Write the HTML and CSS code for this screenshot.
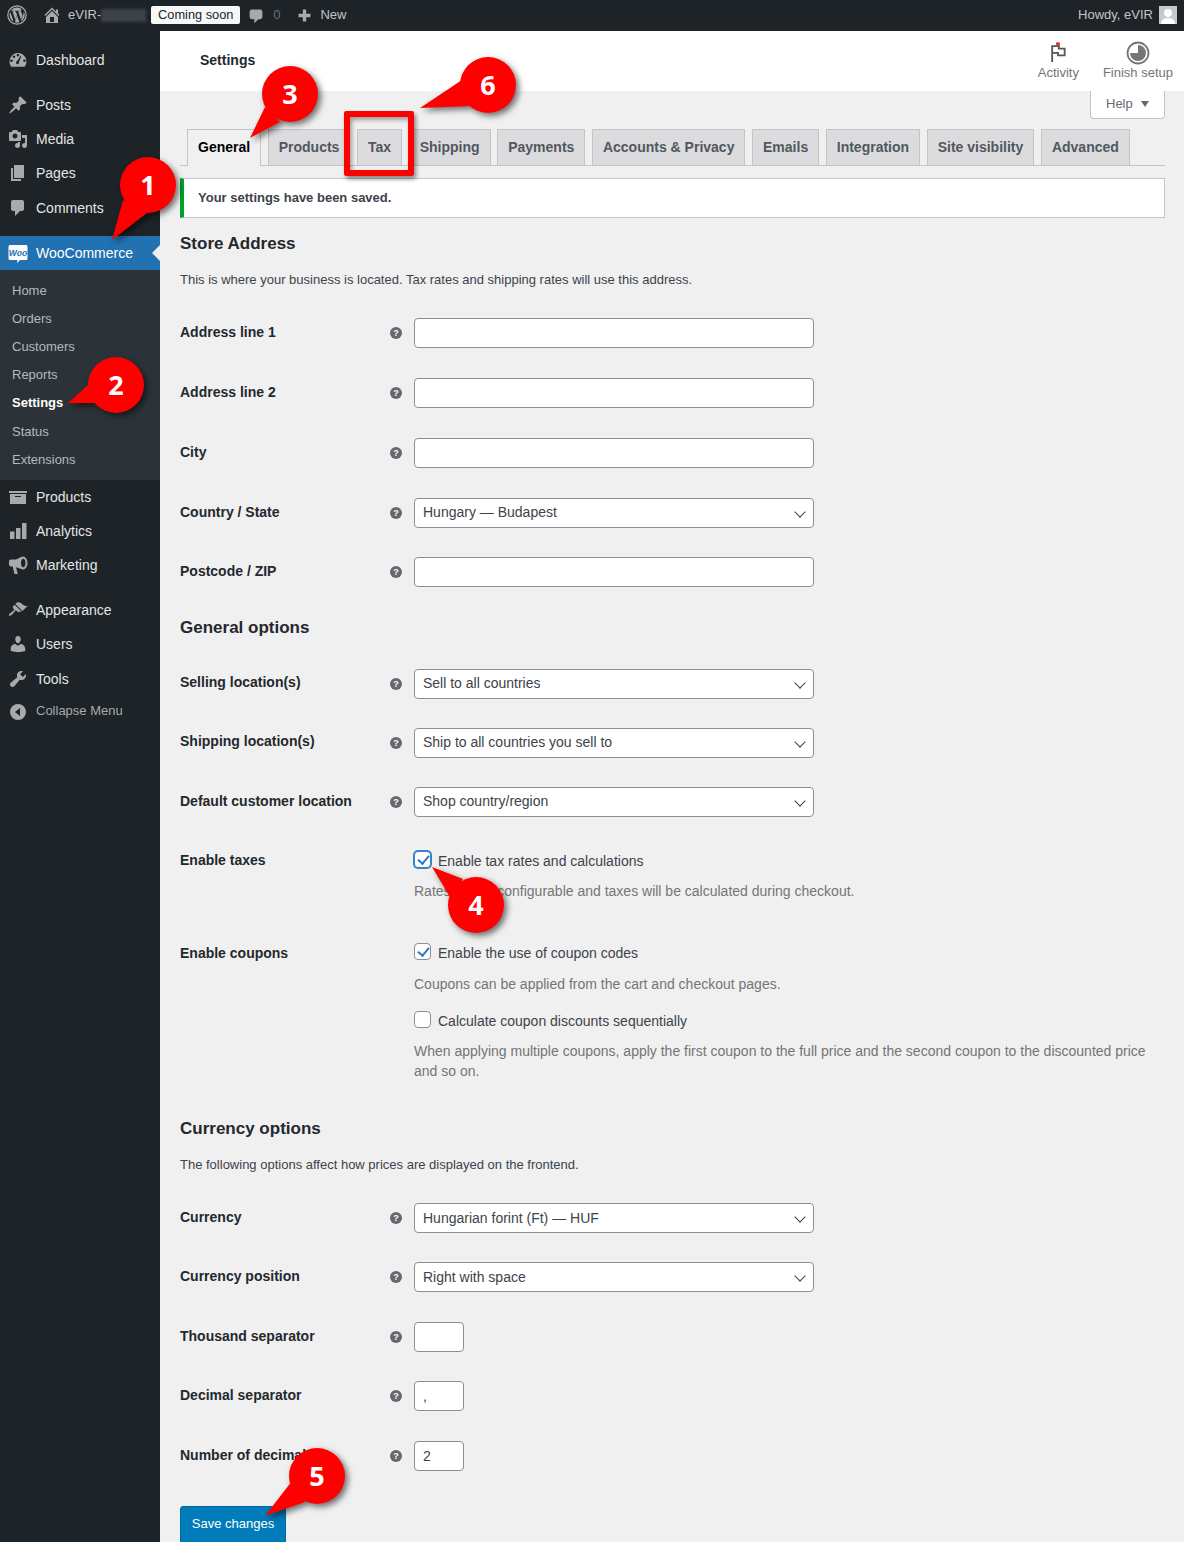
FILE: index.html
```html
<!DOCTYPE html>
<html lang="en">
<head>
<meta charset="utf-8">
<title>Settings</title>
<link rel="stylesheet" href="styles.css">
</head>
<body>
<header class="adminbar">
  <div class="bar-left">
    <svg class="bar-wp" viewBox="0 0 20 20"><circle cx="10" cy="10" r="9.2" fill="none" stroke="currentColor" stroke-width="1.2"/><path fill="currentColor" d="M2.6 10c0 2.9 1.7 5.5 4.2 6.7L3.2 7A7.4 7.4 0 0 0 2.6 10zm12.4-.4c0-.9-.3-1.600-.6-2.100-.4-.6-.7-1.100-.7-1.700 0-.7.5-1.300 1.200-1.300h.1A7.400 7.400 0 0 0 3.800 5.900h.5c.8 0 2-.1 2-.1.400 0 .5.600.1.600 0 0-.4.100-.9.100l2.800 8.400 1.700-5.100-1.200-3.300c-.4 0-.8-.1-.8-.1-.4 0-.4-.6 0-.6 0 0 1.300.1 2 .1.800 0 2-.1 2-.1.400 0 .5.600.1.600 0 0-.4.100-.9.100l2.800 8.300.8-2.600c.3-1.100.6-1.900.6-2.600zm-4.900 1-2.300 6.700a7.400 7.400 0 0 0 4.600-.1l-.1-.1zm6.600-4.300.1.800c0 .8-.1 1.600-.6 2.700l-2.300 6.600a7.400 7.400 0 0 0 2.800-10.100z"/></svg>
    <svg class="bar-home" viewBox="0 0 20 20"><path fill="currentColor" d="M16 8.500l1.530 1.530-1.060 1.060L10 4.620l-6.470 6.470-1.060-1.060L10 2.500l4 4v-2h2v4zm-6-2.460l6 5.990V18H4v-5.970zM12 17v-5H8v5h4z" fill-rule="evenodd"/></svg>
    <span class="bar-site">eVIR-</span><span class="bar-blur"></span>
    <span class="bar-badge">Coming soon</span>
    <svg class="bar-comment" viewBox="0 0 20 20"><path fill="currentColor" d="M5 2h10a3 3 0 0 1 3 3v6a3 3 0 0 1-3 3h-2l-5 5v-5H5a3 3 0 0 1-3-3V5a3 3 0 0 1 3-3z"/></svg>
    <span class="bar-count">0</span>
    <svg class="bar-plus" viewBox="0 0 20 20"><path fill="currentColor" d="M8 3h4v5h5v4h-5v5H8v-5H3V8h5z"/></svg>
    <span class="bar-new">New</span>
  </div>
  <div class="bar-right">
    <span class="bar-howdy">Howdy, eVIR</span>
    <svg class="bar-avatar" viewBox="0 0 18 18"><rect width="18" height="18" fill="#c8c8c8"/><circle cx="9" cy="7" r="4" fill="#fff"/><path fill="#fff" d="M2 18c0-4 3-6 7-6s7 2 7 6z"/></svg>
  </div>
</header>

<div class="shell">
  <nav class="sidebar">
    <ul class="menu menu-first">
      <li class="item"><svg class="ico" viewBox="0 0 20 20"><path d="M10 3a8.500 8.500 0 0 0-8.500 8.500c0 2 .7 3.800 1.800 5.200h13.400a8.400 8.400 0 0 0 1.800-5.200A8.500 8.500 0 0 0 10 3zM6 5.500a1.300 1.300 0 1 1 0 2.600 1.300 1.300 0 0 1 0-2.600zm-2.500 4a1.300 1.300 0 1 1 0 2.600 1.300 1.300 0 0 1 0-2.600zM9 14.200a1.800 1.800 0 0 1 .200-3.300l3.300-4.900.8.400-2.300 5.400A1.800 1.800 0 0 1 9 14.200zM10 4a1.300 1.300 0 1 1 0 2.600A1.300 1.300 0 0 1 10 4zm6.500 5.500a1.300 1.300 0 1 1 0 2.600 1.300 1.300 0 0 1 0-2.600z" fill-rule="evenodd"/></svg>Dashboard</li>
    </ul>
    <ul class="menu">
      <li class="item"><svg class="ico" viewBox="0 0 20 20"><path d="M10.440 3.020l1.820-1.820 6.360 6.350-1.830 1.820c-1.050-.68-2.480-.57-3.410.36l-.75.75c-.92.93-1.040 2.350-.35 3.410l-1.830 1.820-2.410-2.410-2.800 2.790c-.42.42-3.380 2.710-3.800 2.290s1.860-3.390 2.280-3.810l2.790-2.790L4.100 9.360l1.830-1.820c1.050.69 2.480.57 3.400-.36l.75-.75c.93-.92 1.050-2.350.36-3.410z"/></svg>Posts</li>
      <li class="item"><svg class="ico" viewBox="0 0 20 20"><path fill-rule="evenodd" d="M13 11V4c0-.55-.45-1-1-1h-1.670L9 1H5L3.670 3H2c-.55 0-1 .45-1 1v7c0 .55.45 1 1 1h10c.55 0 1-.45 1-1zM7 4.500c1.380 0 2.500 1.120 2.500 2.500S8.380 9.500 7 9.500 4.500 8.380 4.500 7 5.620 4.500 7 4.500zM14 6h5v10.500c0 1.380-1.120 2.500-2.500 2.500S14 17.880 14 16.500s1.120-2.500 2.500-2.500c.17 0 .34.020.5.050V9h-3V6zm-4 8.050V13h2v3.500c0 1.380-1.120 2.500-2.500 2.500S7 17.880 7 16.500 8.120 14 9.500 14c.17 0 .34.020.5.050z"/></svg>Media</li>
      <li class="item"><svg class="ico" viewBox="0 0 20 20"><path d="M6 15V2h10v13H6zm-1 1h8v2H3V5h2v11z"/></svg>Pages</li>
      <li class="item"><svg class="ico" viewBox="0 0 20 20"><path d="M5 2h9c1.100 0 2 .9 2 2v7c0 1.100-.9 2-2 2h-2l-5 5v-5H5c-1.100 0-2-.9-2-2V4c0-1.100.9-2 2-2z"/></svg>Comments</li>
    </ul>
    <div class="woo">
      <div class="item item-current"><svg class="ico-woo" viewBox="0 0 20 20"><path fill="#fff" d="M2 1h16a1.500 1.500 0 0 1 1.500 1.500v12A1.500 1.500 0 0 1 18 16h-6l-3 3 .5-3H2a1.500 1.500 0 0 1-1.500-1.500v-12A1.500 1.500 0 0 1 2 1z"/><text class="woo-text" x="10" y="11.500">Woo</text></svg>WooCommerce</div>
      <ul class="submenu">
        <li>Home</li>
        <li>Orders</li>
        <li>Customers</li>
        <li>Reports</li>
        <li class="sub-current">Settings</li>
        <li>Status</li>
        <li>Extensions</li>
      </ul>
    </div>
    <ul class="menu menu-after-woo">
      <li class="item"><svg class="ico" viewBox="0 0 20 20"><path d="M19 4v2H1V4h18zM2 7h16v10H2V7zm11 3V9H7v1h6z" fill-rule="evenodd"/></svg>Products</li>
      <li class="item"><svg class="ico" viewBox="0 0 20 20"><path d="M2 10.500h4.500V18H2zM8 7h4.500v11H8zM14 2h4.500v16H14z"/></svg>Analytics</li>
      <li class="item"><svg class="ico" viewBox="0 0 20 20"><path fill-rule="evenodd" d="M15 1.500c2.500 0 4.500 3 4.500 6.500s-2 6.500-4.500 6.500c-.6 0-1.200-.2-1.700-.5L8 12.300l1.800 6.700H6.500L4.700 11.500H3A2 2 0 0 1 1 9.500v-3a2 2 0 0 1 2-2h5l5.300-2.500c.5-.3 1.100-.5 1.700-.5zm.2 2.200c-1.300 0-2.200 1.900-2.200 4.300s.9 4.300 2.200 4.300 2.300-1.900 2.300-4.300-1-4.300-2.300-4.300z"/></svg>Marketing</li>
    </ul>
    <ul class="menu">
      <li class="item"><svg class="ico" viewBox="0 0 20 20"><path d="M14.480 11.060L7.410 3.990l1.500-1.500c.5-.56 2.300-.47 3.510.32 1.210.8 1.430 1.280 2.910 2.100 1.180.64 2.450 1.260 4.450.85zm-.71.71L6.700 4.700 4.930 6.470c-.39.39-.39 1.020 0 1.410l1.060 1.060c.39.39.39 1.030 0 1.420-.6.6-1.430 1.110-2.210 1.690-.35.26-.7.53-1.010.84C1.430 13.230.4 14.980 1 15.700c.6.6 2.370-.43 3.710-1.770.31-.31.58-.66.84-1.010.58-.78 1.090-1.610 1.690-2.210.39-.39 1.030-.39 1.420 0l1.060 1.060c.39.39 1.020.39 1.410 0z"/></svg>Appearance</li>
      <li class="item"><svg class="ico" viewBox="0 0 20 20"><path d="M10 9.250c-2.270 0-2.730-3.440-2.730-3.440C7 4.020 7.820 2 9.970 2c2.160 0 2.980 2.020 2.710 3.810 0 0-.41 3.440-2.680 3.440zm0 2.570L12.720 10c2.390 0 4.520 2.330 4.520 4.530v2.490s-3.650 1.130-7.240 1.130c-3.650 0-7.240-1.130-7.240-1.130v-2.490c0-2.250 1.940-4.480 4.470-4.480z"/></svg>Users</li>
      <li class="item"><svg class="ico" viewBox="0 0 20 20"><path d="M16.680 9.770c-1.340 1.340-3.300 1.670-4.950.99l-5.410 6.520c-.99.99-2.590.99-3.580 0s-.99-2.590 0-3.570l6.520-5.420c-.68-1.650-.35-3.610.99-4.950 1.280-1.280 3.120-1.620 4.720-1.060l-2.890 2.890 2.820 2.820 2.860-2.870c.53 1.580.18 3.390-1.080 4.650z"/></svg>Tools</li>
      <li class="item item-collapse"><svg class="ico" viewBox="0 0 20 20"><path fill-rule="evenodd" d="M10 2a8 8 0 1 1 0 16 8 8 0 0 1 0-16zm2 4L7 10l5 4z"/></svg>Collapse Menu</li>
    </ul>
  </nav>

  <div class="main">
    <div class="topbar">
      <h1 class="page-title">Settings</h1>
      <div class="activity">
        <div class="act-item">
          <svg class="act-flag" viewBox="0 0 24 24"><path fill="none" stroke="#50575e" stroke-width="2.200" d="M5 24V5h8v3h7v8h-8v-3H5"/><circle cx="12" cy="2.500" r="2.500" fill="#d63638"/></svg>
          <span>Activity</span>
        </div>
        <div class="act-item">
          <svg class="act-ring" viewBox="0 0 24 24"><circle cx="12" cy="12" r="10.500" fill="none" stroke="#757575" stroke-width="1.800"/><path fill="#757575" d="M12 4a8 8 0 1 1-8 8h8z"/></svg>
          <span>Finish setup</span>
        </div>
      </div>
    </div>

    <div class="content">
      <div class="help-row"><div class="help-tab">Help<span class="help-caret"></span></div></div>

      <div class="tabs">
        <span class="tab tab-active">General</span>
        <span class="tab">Products</span>
        <span class="tab">Tax</span>
        <span class="tab">Shipping</span>
        <span class="tab">Payments</span>
        <span class="tab">Accounts &amp; Privacy</span>
        <span class="tab">Emails</span>
        <span class="tab">Integration</span>
        <span class="tab">Site visibility</span>
        <span class="tab">Advanced</span>
      </div>

      <div class="notice">Your settings have been saved.</div>

      <h2 class="heading heading-store">Store Address</h2>
      <p class="lead">This is where your business is located. Tax rates and shipping rates will use this address.</p>
      <div class="rows rows-store">
        <div class="row"><label class="lbl">Address line 1</label><span class="tip">?</span><input class="field" type="text"></div>
        <div class="row"><label class="lbl">Address line 2</label><span class="tip">?</span><input class="field" type="text"></div>
        <div class="row"><label class="lbl">City</label><span class="tip">?</span><input class="field" type="text"></div>
        <div class="row"><label class="lbl">Country / State</label><span class="tip">?</span><div class="pick">Hungary — Budapest</div></div>
        <div class="row"><label class="lbl">Postcode / ZIP</label><span class="tip">?</span><input class="field" type="text"></div>
      </div>

      <h2 class="heading heading-general">General options</h2>
      <div class="rows rows-general">
        <div class="row"><label class="lbl">Selling location(s)</label><span class="tip">?</span><div class="pick">Sell to all countries</div></div>
        <div class="row"><label class="lbl">Shipping location(s)</label><span class="tip">?</span><div class="pick">Ship to all countries you sell to</div></div>
        <div class="row"><label class="lbl">Default customer location</label><span class="tip">?</span><div class="pick">Shop country/region</div></div>
      </div>

      <div class="checks checks-tax">
        <div class="lbl">Enable taxes</div>
        <div class="check-col">
          <div class="check"><span class="box box-on box-focus"></span>Enable tax rates and calculations</div>
          <p class="hint hint-close">Rates will be configurable and taxes will be calculated during checkout.</p>
        </div>
      </div>

      <div class="checks checks-coupon">
        <div class="lbl">Enable coupons</div>
        <div class="check-col">
          <div class="check"><span class="box box-on"></span>Enable the use of coupon codes</div>
          <p class="hint hint-wide">Coupons can be applied from the cart and checkout pages.</p>
          <div class="check check-second"><span class="box"></span>Calculate coupon discounts sequentially</div>
          <p class="hint hint-close">When applying multiple coupons, apply the first coupon to the full price and the second coupon to the discounted price and so on.</p>
        </div>
      </div>

      <h2 class="heading heading-currency">Currency options</h2>
      <p class="lead">The following options affect how prices are displayed on the frontend.</p>
      <div class="rows rows-currency">
        <div class="row"><label class="lbl">Currency</label><span class="tip">?</span><div class="pick">Hungarian forint (Ft) — HUF</div></div>
        <div class="row"><label class="lbl">Currency position</label><span class="tip">?</span><div class="pick">Right with space</div></div>
        <div class="row"><label class="lbl">Thousand separator</label><span class="tip">?</span><input class="field field-small" type="text"></div>
        <div class="row"><label class="lbl">Decimal separator</label><span class="tip">?</span><input class="field field-small" type="text" value=","></div>
        <div class="row"><label class="lbl">Number of decimals</label><span class="tip">?</span><input class="field field-small" type="text" value="2"></div>
      </div>

      <button class="save" type="button">Save changes</button>
    </div>
  </div>
</div>

<div class="redbox"></div>
<svg class="callouts" viewBox="0 0 1184 1542">
  <g class="bubble">
    <path d="M112 240L123 200L147 213z"/><circle cx="148" cy="185" r="28"/>
  </g>
  <text class="num" x="148" y="195">1</text>
  <g class="bubble">
    <path d="M68 403L88 385L95 403z"/><circle cx="116" cy="385" r="28"/>
  </g>
  <text class="num" x="116" y="395">2</text>
  <g class="bubble">
    <path d="M250 138L265 107L280 122z"/><circle cx="290" cy="94" r="28"/>
  </g>
  <text class="num" x="290" y="104">3</text>
  <g class="bubble">
    <path d="M432 867L463 879L450 897z"/><circle cx="476" cy="905" r="28"/>
  </g>
  <text class="num" x="476" y="915">4</text>
  <g class="bubble">
    <path d="M265 1516L292 1481L305 1502z"/><circle cx="317" cy="1476" r="28"/>
  </g>
  <text class="num" x="317" y="1486">5</text>
  <g class="bubble">
    <path d="M420 108L462 80L470 106z"/><circle cx="488" cy="85" r="28"/>
  </g>
  <text class="num" x="488" y="95">6</text>
</svg>
</body>
</html>
```

FILE: styles.css
```css
* { box-sizing: border-box; }
html, body { margin: 0; padding: 0; height: 1542px; overflow: hidden; }
body {
  position: relative;
  background: #f0f0f1;
  color: #3c434a;
  font-family: "Liberation Sans", Arial, sans-serif;
  font-size: 13px;
  line-height: 20px;
}
ul { list-style: none; margin: 0; padding: 0; }
h1, h2, p { margin: 0; }

/* admin bar */
.adminbar {
  height: 31px;
  background: #1d2327;
  color: #c3c4c7;
  display: flex;
  justify-content: space-between;
  align-items: center;
  padding: 0 7px 1px;
}
.bar-left, .bar-right { display: flex; align-items: center; }
.bar-wp { width: 20px; height: 20px; color: #a7aaad; }
.bar-home { width: 20px; height: 20px; margin-left: 15px; color: #a7aaad; }
.bar-site { margin-left: 6px; }
.bar-blur { width: 45px; height: 13px; background: #3d4347; filter: blur(1.500px); }
.bar-badge {
  margin-left: 5px;
  width: 89px;
  height: 18px;
  font-size: 12.800px;
  line-height: 17px;
  text-align: center;
  background: #f6f7f7;
  color: #1d2327;
  border-radius: 2px;
}
.bar-comment { width: 16px; height: 16px; margin-left: 8px; margin-top: 2px; color: #a7aaad; }
.bar-count { margin-left: 9px; color: #6b7075; }
.bar-plus { width: 17px; height: 17px; margin-left: 16px; margin-top: 1px; color: #a7aaad; }
.bar-new { margin-left: 7px; }
.bar-avatar { width: 18px; height: 18px; margin-left: 6px; }

/* sidebar */
.shell { display: flex; height: 1511px; }
.sidebar { width: 160px; flex: none; background: #1d2327; color: #f0f0f1; font-size: 14px; padding-top: 12px; }
.menu + .menu { margin-top: 10.700px; }
.menu + .woo { margin-top: 11.200px; }
.woo + .menu { margin-top: 0; }
.item {
  height: 34.200px;
  display: flex;
  align-items: center;
  color: #e4e5e6;
}
.ico { width: 20px; height: 20px; margin: 0 8px; fill: #a7aaad; flex: none; }
.ico-woo { width: 20px; height: 20px; margin: 3px 8px 0; flex: none; }
.woo-text { font-size: 8.500px; font-weight: 700; font-style: italic; fill: #2271b1; text-anchor: middle; }
.item-current { position: relative; background: #2271b1; color: #fff; height: 34px; }
.item-current::after {
  content: "";
  position: absolute;
  right: 0;
  top: 9px;
  border: 8px solid transparent;
  border-right-color: #f0f0f1;
  border-left-width: 0;
}
.submenu { background: #2c3338; padding: 6.800px 0 7px; height: 210px; font-size: 13px; color: #b4b9be; }
.submenu li { height: 28.200px; line-height: 28px; padding-left: 12px; }
.sub-current { color: #fff; font-weight: 700; }
.item-collapse { color: #a7aaad; font-size: 13px; height: 30px; }
.item-collapse .ico { margin-top: 2px; }

/* main */
.main { flex: 1; min-width: 0; }
.topbar {
  height: 60px;
  background: #fff;
  display: flex;
  justify-content: space-between;
  padding: 10px 11px 0 40px;
}
.page-title { font-size: 14px; font-weight: 700; color: #23282d; line-height: 20px; margin-top: 9px; }
.activity { display: flex; gap: 24px; }
.act-item { display: flex; flex-direction: column; align-items: center; color: #757575; line-height: 16px; }
.act-flag { width: 20px; height: 22px; }
.act-ring { width: 24px; height: 24px; }
.activity .act-item:first-child span { margin-top: 2px; }

.content { padding: 0 19px 0 20px; }
.help-row { display: flex; justify-content: flex-end; }
.help-tab {
  width: 75px;
  height: 28px;
  background: #fff;
  border: 1px solid #c3c4c7;
  border-top: 0;
  border-radius: 0 0 4px 4px;
  color: #646970;
  padding: 0 0 2px 15px;
  display: flex;
  align-items: center;
}
.help-caret {
  margin-left: 8px;
  border: 4px solid transparent;
  border-top: 6px solid #646970;
  border-bottom: 0;
}

.tabs {
  margin-top: 10px;
  height: 37px;
  padding-left: 7px;
  border-bottom: 1px solid #c3c4c7;
  display: flex;
}
.tab {
  height: 36px;
  margin-right: 6.600px;
  padding: 0 10px;
  background: #dcdcde;
  border: 1px solid #c3c4c7;
  border-bottom: 0;
  font-size: 14px;
  font-weight: 700;
  line-height: 35px;
  color: #50575e;
  white-space: nowrap;
}
.tab-active { background: #f0f0f1; color: #000; height: 37px; }

.notice {
  margin-top: 12px;
  height: 40px;
  background: #fff;
  border: 1px solid #c3c4c7;
  border-left: 4px solid #00a32a;
  padding-left: 14px;
  font-weight: 700;
  line-height: 38px;
  color: #3c434a;
}

.heading { font-size: 17px; font-weight: 700; line-height: 22px; color: #23282d; padding-top: 1px; margin-bottom: -1px; }
.heading-store { margin-top: 14px; }
.heading-general { margin-top: 28.500px; }
.heading-currency { margin-top: 36px; }
.lead { margin-top: 16px; }

.rows { display: flex; flex-direction: column; }
.rows-store { margin-top: 28px; gap: 29.870px; }
.rows-general { margin-top: 30.600px; gap: 29.300px; }
.rows-currency { margin-top: 27.600px; gap: 29.500px; }
.row { display: grid; grid-template-columns: 210px 24px 400px; align-items: center; height: 30px; }
.lbl { font-size: 14px; font-weight: 700; color: #23282d; line-height: 20px; }
.row .lbl { margin-top: -2px; }
.rows-general .lbl { margin-top: -3px; }
.tip {
  width: 12px;
  height: 12px;
  border-radius: 50%;
  background: #646970;
  color: #fff;
  font-size: 9px;
  font-weight: 700;
  line-height: 12px;
  text-align: center;
}
.field, .pick {
  width: 400px;
  height: 30px;
  background: #fff;
  border: 1px solid #8c8f94;
  border-radius: 4px;
  font: 14px/28px "Liberation Sans", Arial, sans-serif;
  color: #3c434a;
  padding: 0 8px;
  margin: 0;
}
.pick { position: relative; }
.rows-store .pick, .rows-general .pick { line-height: 26px; }
.pick::after {
  content: "";
  position: absolute;
  right: 9px;
  top: 9px;
  width: 7px;
  height: 7px;
  border-right: 1.500px solid #3c434a;
  border-bottom: 1.500px solid #3c434a;
  transform: rotate(45deg);
}
.field-small { width: 50px; }

.checks { display: grid; grid-template-columns: 234px 751px; }
.checks-tax { margin-top: 33.800px; }
.checks-tax .lbl { margin-top: -1px; }
.checks-coupon { margin-top: 42px; }
.check { display: flex; align-items: center; height: 20px; font-size: 14px; color: #3c434a; }
.check-second { margin-top: 17px; }
.box {
  position: relative;
  width: 17px;
  height: 17px;
  margin: -2px 7px 0 0;
  background: #fff;
  border: 1px solid #8c8f94;
  border-radius: 4px;
  flex: none;
}
.box-on::after {
  content: "";
  position: absolute;
  left: 4.500px;
  top: 1px;
  width: 5px;
  height: 9px;
  border-right: 2.200px solid #2478c8;
  border-bottom: 2.200px solid #2478c8;
  transform: rotate(40deg);
}
.box-focus { border-color: #3582c4; box-shadow: 0 0 0 1px #3582c4; }
.hint { font-size: 14px; color: #757575; }
.hint-close { margin-top: 10px; }
.hint-wide { margin-top: 11px; }

.save {
  display: block;
  margin-top: 35px;
  width: 106px;
  height: 38px;
  background: #007cba;
  border: 1px solid #006ba1;
  border-radius: 3px;
  color: #fff;
  font: 13px/20px "Liberation Sans", Arial, sans-serif;
  padding: 0 0 2px;
}

/* annotations painted over the screenshot */
.redbox {
  position: absolute;
  left: 344px;
  top: 111px;
  width: 70px;
  height: 65px;
  border: 6px solid #f00;
  border-radius: 2px;
  box-shadow: 2px 3px 4px rgba(0,0,0,.45), inset 2px 3px 4px rgba(0,0,0,.35);
}
.callouts { position: absolute; left: 0; top: 0; width: 1184px; height: 1542px; pointer-events: none; }
.bubble { fill: #f00; filter: drop-shadow(3px 3px 3px rgba(0,0,0,.55)); }
.num { font-family: "Open Sans", sans-serif; font-weight: 700; font-size: 27px; fill: #fff; text-anchor: middle; }
```
